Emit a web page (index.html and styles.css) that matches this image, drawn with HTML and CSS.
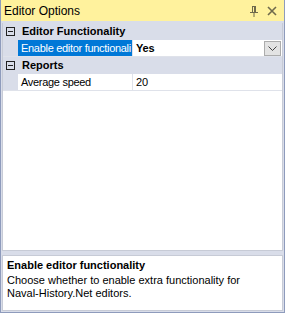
FILE: index.html
```html
<!DOCTYPE html>
<html>
<head>
<meta charset="utf-8">
<link rel="stylesheet" href="styles.css">
</head>
<body>
<div class="window">
  <div class="titlebar">
    <span class="title">Editor Options</span>
    <span class="tools">
      <svg class="pin" width="8" height="11" viewBox="0 0 8 11"><path d="M2 0.5H6M2.5 0.5V6.5M5.5 0.5V6.5M4.5 1V6.5M0 6.5H8M4 6.5V11" stroke="#6f6a4c" stroke-width="1" fill="none"/></svg>
      <svg class="close" width="10" height="10" viewBox="0 0 10 10"><path d="M1 1L9 9M9 1L1 9" stroke="#6f6a4c" stroke-width="1.6" fill="none"/></svg>
    </span>
  </div>
  <div class="body">
    <div class="grid">
      <div class="cat">
        <span class="gut"><span class="minus"></span></span>
        <span class="catname">Editor Functionality</span>
      </div>
      <div class="prop selected">
        <span class="gut"></span>
        <span class="label">Enable editor functionali</span>
        <span class="value bold"><span class="vtext">Yes</span><span class="drop"><svg width="9" height="5" viewBox="0 0 9 5"><path d="M0.5 0.5L4.5 4.5L8.5 0.5" stroke="#444" stroke-width="1" fill="none"/></svg></span></span>
      </div>
      <div class="cat">
        <span class="gut"><span class="minus"></span></span>
        <span class="catname">Reports</span>
      </div>
      <div class="prop">
        <span class="gut"></span>
        <span class="label">Average speed</span>
        <span class="value"><span class="vtext">20</span></span>
      </div>
    </div>
    <div class="desc">
      <div class="dtitle">Enable editor functionality</div>
      <div class="dtext">Choose whether to enable extra functionality for Naval-History.Net editors.</div>
    </div>
  </div>
</div>
</body>
</html>
```
FILE: styles.css
```css
html, body { margin: 0; padding: 0; }
body { width: 285px; height: 313px; overflow: hidden; background: #fff; font-family: "Liberation Sans", Arial, sans-serif; font-size: 11px; color: #000; }
.window { width: 285px; height: 313px; box-sizing: border-box; display: flex; flex-direction: column; background: #d9dde9; border-left: 1px solid #8e9bbc; border-right: 1px solid #8e9bbc; border-bottom: 1px solid #8e9bbc; }
.titlebar { height: 21px; flex: none; background: #fff29d; display: flex; align-items: center; justify-content: space-between; padding: 0 7px 0 3px; }
.title { font-size: 12px; padding-top: 1px; }
.tools { display: flex; align-items: center; gap: 9px; }
.pin { margin-top: 1px; }
.body { flex: 1; display: flex; flex-direction: column; padding: 2px 1px 1px 1px; gap: 4px; }
.grid { flex: 1; background: #fff; border: 1px solid #c7cbd6; border-top: none; }
.cat, .prop { display: flex; height: 16px; border-bottom: 1px solid #dfe2ea; }
.cat { background: #d9dde9; border-bottom-color: #d9dde9; }
.gut { width: 15px; flex: none; background: #d9dde9; display: flex; align-items: center; justify-content: center; }
.minus { width: 7px; height: 7px; border: 1px solid #222; position: relative; }
.minus::after { content: ""; position: absolute; left: 1px; right: 1px; top: 3px; height: 1px; background: #222; }
.catname { font-weight: bold; line-height: 16px; padding-left: 4px; }
.label { width: 115px; flex: none; line-height: 16px; padding-left: 3px; box-sizing: border-box; white-space: nowrap; overflow: hidden; border-right: 1px solid #dfe2ea; letter-spacing: -0.3px; }
.selected .label { background: #0078d7; color: #fff; }
.value { flex: 1; min-width: 0; line-height: 16px; padding-left: 3px; display: flex; justify-content: space-between; letter-spacing: -0.2px; }
.bold { font-weight: bold; }
.drop { width: 15px; height: 13px; margin: 1px 1px 0 0; background: #e3e3e3; border: 1px solid #acacac; display: flex; align-items: center; justify-content: center; flex: none; }
.desc { height: 56px; flex: none; background: #fff; border: 1px solid #c7cbd6; padding: 3px 4px; box-sizing: border-box; line-height: 13px; }
.dtitle { font-weight: bold; margin-bottom: 2px; }
.dtext { max-width: 240px; }
```
